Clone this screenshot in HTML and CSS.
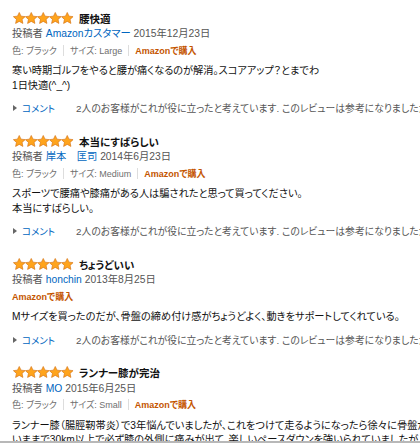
FILE: index.html
```html
<!DOCTYPE html>
<html lang="ja">
<head>
<meta charset="utf-8">
<link rel="stylesheet" href="styles.css">
</head>
<body>
<svg width="0" height="0" class="defs">
  <defs>
    <symbol id="star" viewBox="0 0 24 24">
      <path d="M12 .9l3.4 7.1 7.8.9-5.8 5.3 1.6 7.7L12 18l-7 3.9 1.6-7.7L.8 8.9l7.8-.9z" fill="#ffa41c" stroke="#d57517" stroke-width="1.3" stroke-linejoin="round"/>
    </symbol>
  </defs>
</svg>
<div class="list">
  <div class="review">
    <div class="title-row">
      <span class="stars"><svg><use href="#star"/></svg><svg><use href="#star"/></svg><svg><use href="#star"/></svg><svg><use href="#star"/></svg><svg><use href="#star"/></svg></span>
      <span class="title">腰快適</span>
    </div>
    <div class="author-row"><span class="muted">投稿者</span> <span class="link">Amazonカスタマー</span> <span class="muted">2015年12月23日</span></div>
    <div class="meta-row"><span>色: ブラック</span><span class="sep"></span><span>サイズ: Large</span><span class="sep"></span><span class="buy">Amazonで購入</span></div>
    <div class="body">寒い時期ゴルフをやると腰が痛くなるのが解消。スコアアップ？とまでわ<br>1日快適(^_^)</div>
    <div class="comment-row"><span class="tri"></span><span class="link">コメント</span><span class="vsep"></span><span class="helpful">2人のお客様がこれが役に立ったと考えています. このレビューは参考になりましたか？</span></div>
  </div>
  <div class="review">
    <div class="title-row">
      <span class="stars"><svg><use href="#star"/></svg><svg><use href="#star"/></svg><svg><use href="#star"/></svg><svg><use href="#star"/></svg><svg><use href="#star"/></svg></span>
      <span class="title">本当にすばらしい</span>
    </div>
    <div class="author-row"><span class="muted">投稿者</span> <span class="link">岸本　匡司</span> <span class="muted">2014年6月23日</span></div>
    <div class="meta-row"><span>色: ブラック</span><span class="sep"></span><span>サイズ: Medium</span><span class="sep"></span><span class="buy">Amazonで購入</span></div>
    <div class="body">スポーツで腰痛や膝痛がある人は騙されたと思って買ってください。<br>本当にすばらしい。</div>
    <div class="comment-row"><span class="tri"></span><span class="link">コメント</span><span class="vsep"></span><span class="helpful">2人のお客様がこれが役に立ったと考えています. このレビューは参考になりましたか？</span></div>
  </div>
  <div class="review">
    <div class="title-row">
      <span class="stars"><svg><use href="#star"/></svg><svg><use href="#star"/></svg><svg><use href="#star"/></svg><svg><use href="#star"/></svg><svg><use href="#star"/></svg></span>
      <span class="title">ちょうどいい</span>
    </div>
    <div class="author-row"><span class="muted">投稿者</span> <span class="link">honchin</span> <span class="muted">2013年8月25日</span></div>
    <div class="meta-row"><span class="buy">Amazonで購入</span></div>
    <div class="body">Mサイズを買ったのだが、骨盤の締め付け感がちょうどよく、動きをサポートしてくれている。</div>
    <div class="comment-row"><span class="tri"></span><span class="link">コメント</span><span class="vsep"></span><span class="helpful">2人のお客様がこれが役に立ったと考えています. このレビューは参考になりましたか？</span></div>
  </div>
  <div class="review">
    <div class="title-row">
      <span class="stars"><svg><use href="#star"/></svg><svg><use href="#star"/></svg><svg><use href="#star"/></svg><svg><use href="#star"/></svg><svg><use href="#star"/></svg></span>
      <span class="title">ランナー膝が完治</span>
    </div>
    <div class="author-row"><span class="muted">投稿者</span> <span class="link">MO</span> <span class="muted">2015年6月25日</span></div>
    <div class="meta-row"><span>色: ブラック</span><span class="sep"></span><span>サイズ: Small</span><span class="sep"></span><span class="buy">Amazonで購入</span></div>
    <div class="body">ランナー膝（腸脛靭帯炎）で3年悩んでいましたが、これをつけて走るようになったら徐々に骨盤が安定してきました。<br>いままで30km以上で必ず膝の外側に痛みが出て、楽しいペースダウンを強いられていましたが、今はまったく痛みません。</div>
  </div>
</div>
<div class="hbar"></div>
</body>
</html>
```

FILE: styles.css
```css
html, body {
  margin: 0;
  padding: 0;
  overflow: hidden;
  background: #fff;
}
body {
  font-family: "Liberation Sans", "Noto Sans CJK JP", sans-serif;
  font-size: 10.3px;
  color: #111;
  font-feature-settings: "palt";
}
.defs {
  position: absolute;
  width: 0;
  height: 0;
}
.list {
  padding: 10px 0 0 12px;
  white-space: nowrap;
}
.review {
  margin-bottom: 17px;
}
.title-row {
  display: flex;
  align-items: center;
  height: 16px;
}
.stars {
  display: flex;
  margin-left: 1px;
}
.stars svg {
  width: 12.5px;
  height: 12.5px;
  margin-right: -0.5px;
}
.title {
  font-weight: bold;
  font-size: 10.5px;
  margin-left: 6px;
  color: #111;
}
.author-row {
  line-height: 16px;
  height: 16px;
}
.muted {
  color: #555;
}
.link {
  color: #0066c0;
}
.meta-row {
  display: flex;
  align-items: center;
  height: 16px;
  font-size: 9px;
  color: #6f6f6f;
}
.sep {
  width: 1px;
  height: 11px;
  background: #ddd;
  margin: 0 6px;
}
.buy {
  color: #c45500;
  font-weight: bold;
}
.body {
  margin-top: 6px;
  line-height: 14.5px;
  font-size: 10.2px;
  color: #111;
}
.comment-row {
  display: flex;
  align-items: center;
  height: 16px;
  margin-top: 7px;
  font-size: 9.5px;
}
.tri {
  width: 0;
  height: 0;
  border-top: 3px solid transparent;
  border-bottom: 3px solid transparent;
  border-left: 4px solid #666;
  margin: 0 5px 0 1px;
}
.vsep {
  width: 1px;
  height: 13px;
  background: #ddd;
  margin: 0 12px 0 9px;
}
.helpful {
  color: #555;
  font-size: 9.8px;
}
.hbar {
  position: fixed;
  left: 0;
  right: 0;
  bottom: 0;
  height: 2px;
  background: #b8b8b8;
}
```
